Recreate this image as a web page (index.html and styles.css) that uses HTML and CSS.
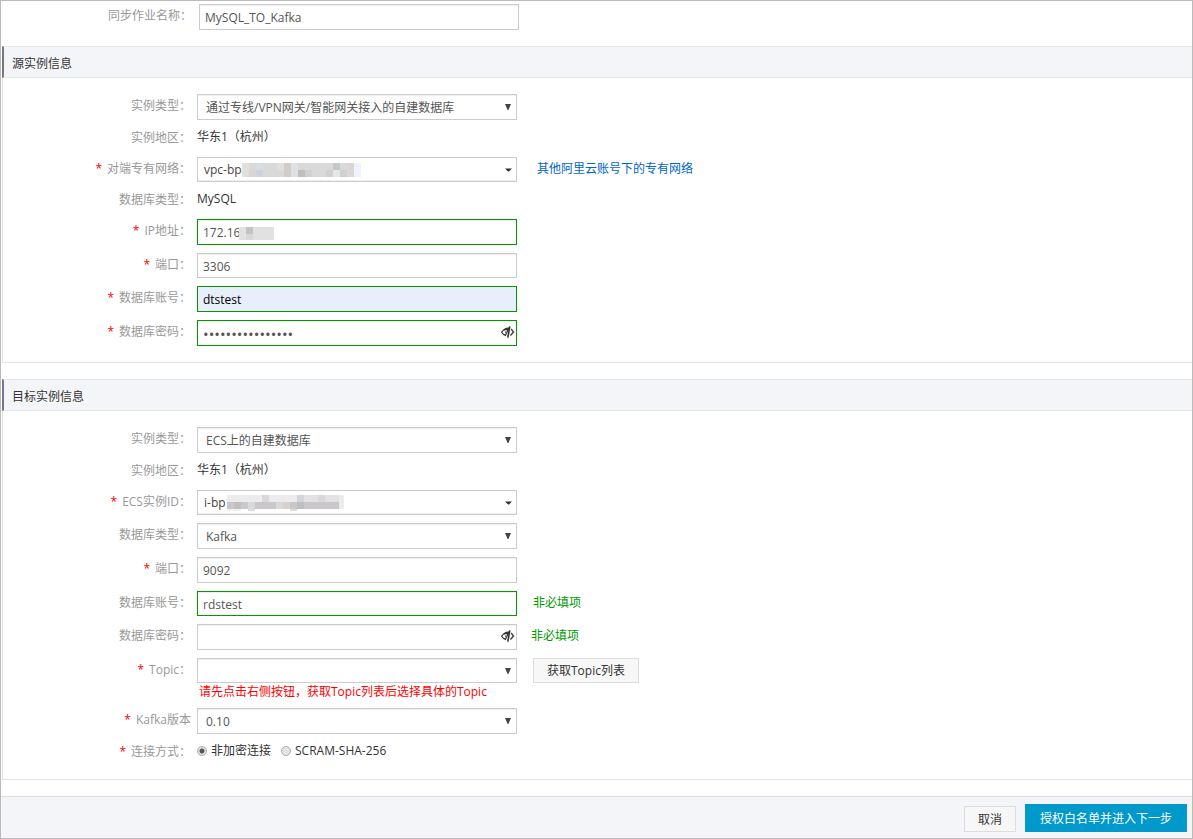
FILE: index.html
```html
<!DOCTYPE html>
<html lang="zh-CN">
<head>
<meta charset="utf-8">
<title>同步作业</title>
<link rel="stylesheet" href="styles.css">
</head>
<body>
<svg class="defs" aria-hidden="true">
  <symbol id="arrow" viewBox="0 0 6 6"><path d="M0 0H6L3.4 6H2.6Z" fill="#444"/></symbol>
  <symbol id="caret" viewBox="0 0 7 4"><path d="M0 0.5H7L4 3.5H3Z" fill="#333"/></symbol>
  <symbol id="eye" viewBox="0 0 14 12">
    <path d="M0.6 6.2Q4 1.8 7.6 2L7.2 3.6L4.4 9.4Q2 8.4 0.6 6.2Z" fill="none" stroke="#333" stroke-width="1.2"/>
    <path d="M2 5Q4.5 1.6 8.6 1.9L7.4 4.6Q4.5 3.6 2 5Z" fill="#333"/>
    <path d="M5 5.2Q4.2 7 5.6 7.6" fill="none" stroke="#666" stroke-width="1.1"/>
    <path d="M8.8 0.3L6.8 11.7" fill="none" stroke="#333" stroke-width="1.6"/>
    <path d="M10.2 3L12.4 6.2L9.4 9.4" fill="none" stroke="#444" stroke-width="1.5"/>
  </symbol>
</svg>
<form class="page">
  <div class="row row-name">
    <label class="label" for="job">同步作业名称：</label>
    <div class="control"><input class="field" id="job" type="text" value="MySQL_TO_Kafka"></div>
  </div>

  <section class="panel">
    <h2 class="panel-title">源实例信息</h2>
    <div class="panel-body">
      <div class="row">
        <label class="label" for="src-type">实例类型：</label>
        <div class="control">
          <select class="field select" id="src-type"><option>通过专线/VPN网关/智能网关接入的自建数据库</option></select>
          <svg class="arrow"><use href="#arrow"/></svg>
        </div>
      </div>
      <div class="row row-text">
        <span class="label">实例地区：</span><span class="value">华东1（杭州）</span>
      </div>
      <div class="row">
        <label class="label" for="vpc"><span class="req">*</span>对端专有网络：</label>
        <div class="control">
          <button class="field short combo" id="vpc" type="button">vpc-bp<svg class="mosaic" width="119" height="14" shape-rendering="crispEdges">
            <path fill="#d9d9da" d="M0 0H112V14H0z"/>
            <path fill="#e0dfdb" d="M0 0h7v14H0zM35 0h7v7h-7z"/>
            <path fill="#dbdce3" d="M14 0h7v7h-7z"/>
            <path fill="#dcd6d3" d="M7 7h7v7H7zM105 0h7v7h-7z"/>
            <path fill="#cfd2de" d="M14 7h7v7h-7z"/>
            <path fill="#d2ccca" d="M42 0h7v14h-7z"/>
            <path fill="#dde1e1" d="M49 0h7v14h-7z"/>
            <path fill="#c2bebc" d="M56 7h7v7h-7z"/>
            <path fill="#cfd0d1" d="M63 7h7v7h-7zM84 7h7v7h-7zM98 7h7v7h-7z"/>
            <path fill="#c8c7c6" d="M91 0h7v7h-7z"/>
            <path fill="#e5e7e6" d="M91 7h7v7h-7z"/>
            <path fill="#eff2fa" d="M112 0h7v14h-7z"/>
          </svg></button>
          <svg class="caret"><use href="#caret"/></svg>
        </div>
        <a class="link" href="#">其他阿里云账号下的专有网络</a>
      </div>
      <div class="row row-text">
        <span class="label">数据库类型：</span><span class="value">MySQL</span>
      </div>
      <div class="row">
        <label class="label" for="ip"><span class="req">*</span>IP地址：</label>
        <div class="control">
          <input class="field valid" id="ip" type="text" value="172.16">
          <svg class="mosaic-over" width="35" height="13" shape-rendering="crispEdges">
            <path fill="#e1e1e2" d="M0 0H35V13H0z"/>
            <path fill="#c3c3c3" d="M7 0h7v7H7z"/>
            <path fill="#d8d8d8" d="M7 7h7v6H7z"/>
          </svg>
        </div>
      </div>
      <div class="row">
        <label class="label" for="src-port"><span class="req">*</span>端口：</label>
        <div class="control"><input class="field short" id="src-port" type="text" value="3306"></div>
      </div>
      <div class="row">
        <label class="label" for="src-user"><span class="req">*</span>数据库账号：</label>
        <div class="control"><input class="field valid filled" id="src-user" type="text" value="dtstest"></div>
      </div>
      <div class="row">
        <label class="label" for="src-pass"><span class="req">*</span>数据库密码：</label>
        <div class="control">
          <input class="field valid password" id="src-pass" type="password" value="abcdefghijklmnop">
          <button class="eye" type="button" aria-label="显示密码"><svg width="14" height="12"><use href="#eye"/></svg></button>
        </div>
      </div>
    </div>
  </section>

  <section class="panel">
    <h2 class="panel-title">目标实例信息</h2>
    <div class="panel-body">
      <div class="row">
        <label class="label" for="dst-type">实例类型：</label>
        <div class="control">
          <select class="field select" id="dst-type"><option>ECS上的自建数据库</option></select>
          <svg class="arrow"><use href="#arrow"/></svg>
        </div>
      </div>
      <div class="row row-text">
        <span class="label">实例地区：</span><span class="value">华东1（杭州）</span>
      </div>
      <div class="row">
        <label class="label" for="ecs"><span class="req">*</span>ECS实例ID：</label>
        <div class="control">
          <button class="field short combo" id="ecs" type="button">i-bp1<svg class="mosaic mosaic-overlap" width="117" height="16" shape-rendering="crispEdges">
            <path fill="#ececee" d="M0 0H117V14H0z"/>
            <path fill="#d9d9da" d="M35 0h7v7h-7zM91 0h7v7h-7z"/>
            <path fill="#d3d5da" d="M70 0h7v7h-7z"/>
            <path fill="#e2e2e2" d="M77 0h14v7H77zM98 0h14v7H98z"/>
            <path fill="#c9c7c9" d="M0 7H112V14H0z"/>
            <path fill="#bfbec2" d="M7 7h7v7H7zM70 7h7v7h-7z"/>
            <path fill="#d9d9d9" d="M21 7h7v7h-7zM49 7h7v7h-7z"/>
            <path fill="#d9d1cd" d="M56 7h7v7h-7z"/>
            <path fill="#dddddf" d="M21 14h7v2h-7zM63 14h7v2h-7z"/>
            <path fill="#f0f0f1" d="M0 14h14v2H0z"/>
          </svg></button>
          <svg class="caret"><use href="#caret"/></svg>
        </div>
      </div>
      <div class="row">
        <label class="label" for="dst-db">数据库类型：</label>
        <div class="control">
          <select class="field select" id="dst-db"><option>Kafka</option></select>
          <svg class="arrow"><use href="#arrow"/></svg>
        </div>
      </div>
      <div class="row">
        <label class="label" for="dst-port"><span class="req">*</span>端口：</label>
        <div class="control"><input class="field" id="dst-port" type="text" value="9092"></div>
      </div>
      <div class="row">
        <label class="label" for="dst-user">数据库账号：</label>
        <div class="control"><input class="field short valid" id="dst-user" type="text" value="rdstest"></div>
        <span class="hint">非必填项</span>
      </div>
      <div class="row">
        <label class="label" for="dst-pass">数据库密码：</label>
        <div class="control">
          <input class="field password" id="dst-pass" type="password">
          <button class="eye" type="button" aria-label="显示密码"><svg width="14" height="12"><use href="#eye"/></svg></button>
        </div>
        <span class="hint hint-near">非必填项</span>
      </div>
      <div class="row">
        <label class="label" for="topic"><span class="req">*</span>Topic：</label>
        <div class="control">
          <select class="field short select" id="topic"><option></option></select>
          <svg class="arrow"><use href="#arrow"/></svg>
        </div>
        <button class="btn btn-fetch" type="button">获取Topic列表</button>
        <p class="error">请先点击右侧按钮，获取Topic列表后选择具体的Topic</p>
      </div>
      <div class="row">
        <label class="label" for="version"><span class="req">*</span>Kafka版本</label>
        <div class="control">
          <select class="field select" id="version"><option>0.10</option></select>
          <svg class="arrow"><use href="#arrow"/></svg>
        </div>
      </div>
      <div class="row row-text">
        <span class="label" id="mode-label"><span class="req">*</span>连接方式：</span>
        <div class="value radios" role="radiogroup" aria-labelledby="mode-label">
          <label class="radio"><input type="radio" name="mode" checked>非加密连接</label>
          <label class="radio"><input type="radio" name="mode">SCRAM-SHA-256</label>
        </div>
      </div>
    </div>
  </section>

  <footer class="footer">
    <button class="btn" type="button">取消</button>
    <button class="btn-primary" type="submit">授权白名单并进入下一步</button>
  </footer>
</form>
</body>
</html>
```
FILE: styles.css
```css
* { box-sizing: border-box; }
body {
  margin: 0;
  background: #fff;
  color: #333;
  font: 12px/16px "Open Sans", "Noto Sans CJK SC", sans-serif;
}
input, select, button { font: inherit; color: inherit; }
.defs { position: absolute; width: 0; height: 0; }

.page {
  display: flex;
  flex-direction: column;
  min-height: 100vh;
  border: 1px solid #bbb;
}

/* Form rows */
.row {
  display: grid;
  grid-template-columns: 188px 320px auto;
  justify-content: start;
  column-gap: 6px;
  align-items: center;
}
.row-name { margin: 3px 0 16px; padding-left: 3px; column-gap: 7px; }
.row-text { height: 21px; grid-template-columns: 188px auto; }
.label {
  padding-bottom: 2px;
  text-align: right;
  color: #999;
  white-space: nowrap;
}
.value { padding-bottom: 3px; }
.req { margin-right: 5px; color: #f00; }

/* Fields */
.control { position: relative; display: flex; }
.field {
  width: 100%;
  height: 26px;
  margin: 0;
  padding: 1px 5px 0;
  border: 1px solid #ccc;
  border-radius: 0;
  outline: 0;
  background: #fff;
  box-shadow: inset 0 1px 1px #eee;
  color: #555;
}
.short { height: 25px; }
.select { appearance: none; padding: 2px 24px 0 8px; }
.combo {
  display: flex;
  align-items: center;
  padding: 0 6px;
  box-shadow: inset 0 -1px 1px #eee;
  color: #444;
  text-align: left;
}
.valid { border-color: #090; }
.filled { background: #e8eefc; color: #000; }
.password { font-size: 15px; }
.mosaic { flex: none; }
.mosaic-overlap { margin-left: -5px; }
.mosaic-over { position: absolute; left: 42px; top: 8px; }
.arrow { position: absolute; right: 6px; top: 10px; width: 6px; height: 6px; pointer-events: none; }
.caret { position: absolute; right: 5px; top: 11px; width: 7px; height: 4px; pointer-events: none; }
.eye {
  position: absolute;
  right: 2px;
  top: 6px;
  display: flex;
  padding: 0;
  border: 0;
  background: none;
}

.link { margin-left: 14px; padding-bottom: 2px; color: #06c; text-decoration: none; }
.hint { margin-left: 10px; padding-bottom: 2px; color: #090; }
.hint-near { margin-left: 8px; }
.error { grid-column: 2 / -1; height: 17px; margin: 0; padding: 1px 0 0 2px; color: #f00; }

.radios { display: flex; gap: 10px; }
.radio { display: flex; align-items: center; gap: 4px; }
.radio input {
  appearance: none;
  width: 10px;
  height: 10px;
  margin: 0;
  border: 1px solid #aaa;
  border-radius: 50%;
  background: #e4e4e4;
}
.radio input:checked { background: radial-gradient(circle, #555 0 2px, #e4e4e4 3px); }

/* Panels */
.panel {
  margin: 0 0 16px 1px;
  border: solid #e1e6eb;
  border-width: 0 0 1px 1px;
}
.panel-title {
  height: 32px;
  margin: 0 0 0 -1px;
  padding: 9px 8px 0;
  border: solid #e1e6eb;
  border-width: 1px 0;
  border-left: 2px solid #778;
  background: #f4f5f9;
  font-size: 12px;
  font-weight: 400;
}
.panel-body { display: grid; gap: 8px; padding: 16px 0; }

/* Buttons */
.btn {
  height: 26px;
  padding: 1px 13px 0;
  border: 1px solid #ddd;
  background: #f7f7f7;
}
.btn-fetch { height: 25px; margin-left: 10px; }
.btn-primary {
  height: 28px;
  padding: 1px 15px 0;
  border: 0;
  background: #09c;
  color: #fff;
}
.footer {
  display: flex;
  flex: 1;
  justify-content: flex-end;
  align-items: flex-end;
  gap: 9px;
  padding: 7px 5px 6px;
  border-top: 1px solid #ddd;
  background: #f4f5f9;
}
```
